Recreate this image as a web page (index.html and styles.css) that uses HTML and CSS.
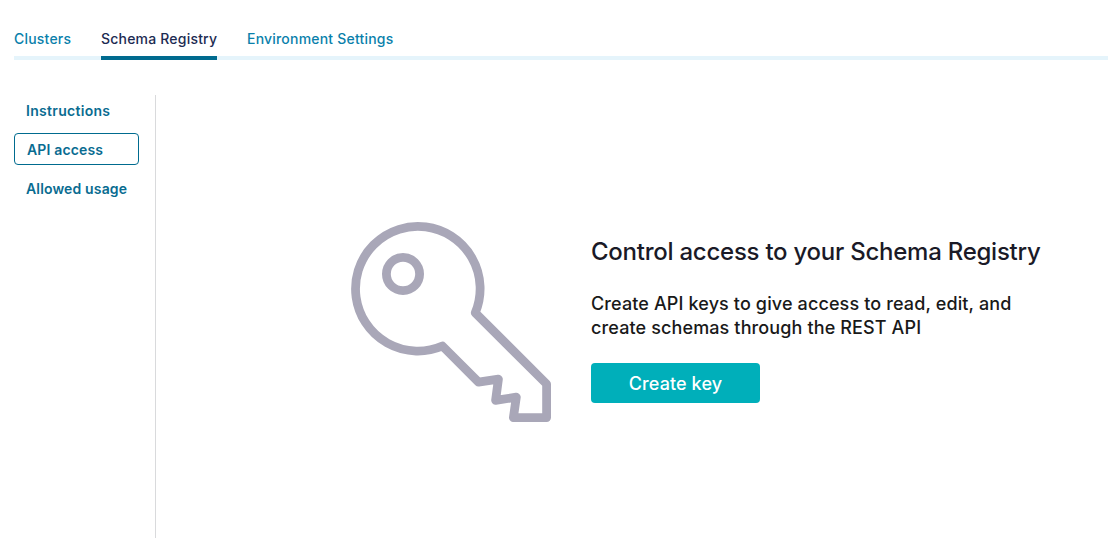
FILE: index.html
```html
<!DOCTYPE html>
<html lang="en">
<head>
<meta charset="utf-8">
<title>Schema Registry</title>
<link rel="stylesheet" href="styles.css">
</head>
<body>
<nav class="tabs">
  <a class="tab clusters">Clusters</a>
  <a class="tab active">Schema Registry</a>
  <a class="tab settings">Environment Settings</a>
</nav>
<div class="layout">
  <aside class="sidebar">
    <a class="side-link instructions">Instructions</a>
    <a class="side-link selected">API access</a>
    <a class="side-link usage">Allowed usage</a>
  </aside>
  <main class="content">
    <svg class="key" viewBox="0 0 200 200" fill="none" stroke="#a9a7b8" stroke-width="8.8" stroke-linejoin="round">
      <path d="M124.3 90.8A62.3 62.3 0 1 0 91.4 124L127.5 160.2L147.4 157.2L144.6 178.3L165.3 175.2L162.4 195.6H195.6V162Z"/>
      <circle cx="52" cy="52" r="16.6"/>
    </svg>
    <section class="message">
      <h1 class="title"><span>Control access to your Schema Registry</span></h1>
      <p class="description"><span>Create API keys to give access to read, edit, and</span><br><span>create schemas through the REST API</span></p>
      <button class="create"><span>Create key</span></button>
    </section>
  </main>
</div>
</body>
</html>
```
FILE: styles.css
```css
* { box-sizing: border-box; }
body {
  margin: 0;
  height: 538px;
  overflow: hidden;
  background: #fff;
  font-family: Inter, "Liberation Sans", sans-serif;
  -webkit-font-smoothing: antialiased;
}
.tabs {
  display: flex;
  gap: 30px;
  height: 60px;
  margin-left: 14px;
  padding-top: 22px;
  box-shadow: inset 0 -4px #e5f4fb;
}
.tab {
  height: 38px;
  font-size: 14px;
  line-height: 34px;
  font-weight: 500;
  letter-spacing: 0.2px;
  color: #0a7fab;
  white-space: nowrap;
}
.clusters { width: 57px; }
.active {
  width: 116px;
  color: #1c2b52;
  border-bottom: 4px solid #006b8f;
}
.layout { display: flex; height: 443px; margin-top: 35px; }
.sidebar {
  display: flex;
  flex-direction: column;
  gap: 7px;
  width: 156px;
  padding: 0 16px 0 14px;
  border-right: 1px solid #d9dadc;
}
.side-link {
  height: 32px;
  padding-left: 12px;
  font-size: 14px;
  line-height: 32px;
  font-weight: 600;
  letter-spacing: 0.15px;
  color: #096c91;
  white-space: nowrap;
}
.instructions { height: 31px; letter-spacing: 0.3px; }
.usage { line-height: 34px; }
.selected {
  border: 1px solid #006b8f;
  border-radius: 4px;
}
.content {
  display: flex;
  align-items: flex-start;
  gap: 40px;
  padding: 127px 0 0 195px;
}
.key { display: block; width: 200px; height: 200px; flex: none; }
.message { padding-top: 14px; }
.title {
  margin: 0;
  font-size: 24px;
  line-height: 32px;
  font-weight: 500;
  letter-spacing: -0.25px;
  color: #1a1a27;
  white-space: nowrap;
}
.description {
  margin: 24px 0 23px;
  font-size: 18px;
  line-height: 24px;
  font-weight: 500;
  letter-spacing: 0.125px;
  color: #191919;
  white-space: nowrap;
}
.create {
  display: block;
  width: 169px;
  height: 40px;
  padding: 1px 0 0;
  border: 0;
  border-radius: 4px;
  background: #00afba;
  color: #fff;
  font: 500 18px/40px Inter, "Liberation Sans", sans-serif;
  letter-spacing: 0.1px;
}
```
